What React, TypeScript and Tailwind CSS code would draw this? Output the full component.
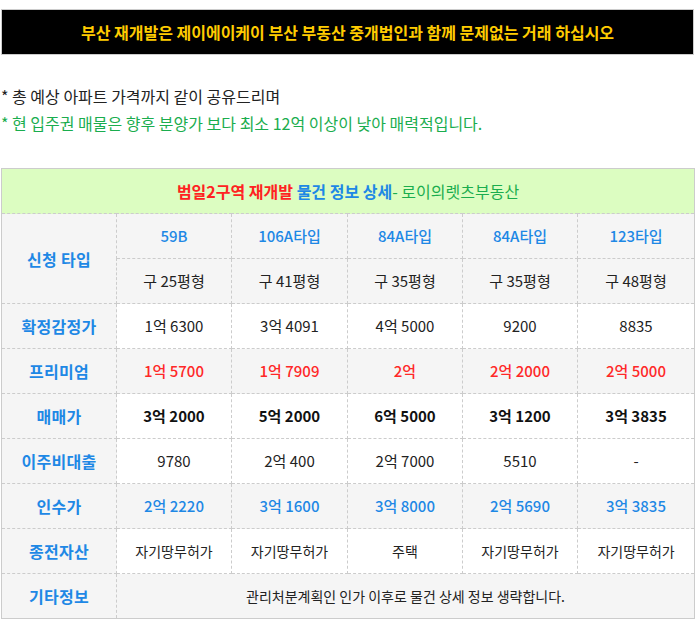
import React from "react";

const types = ["59B", "106A타입", "84A타입", "84A타입", "123타입"];
const pyeong = ["구 25평형", "구 41평형", "구 35평형", "구 35평형", "구 48평형"];
const appraisal = ["1억 6300", "3억 4091", "4억 5000", "9200", "8835"];
const premium = ["1억 5700", "1억 7909", "2억", "2억 2000", "2억 5000"];
const price = ["3억 2000", "5억 2000", "6억 5000", "3억 1200", "3억 3835"];
const loan = ["9780", "2억 400", "2억 7000", "5510", "-"];
const takeover = ["2억 2220", "3억 1600", "3억 8000", "2억 5690", "3억 3835"];
const asset = ["자기땅무허가", "자기땅무허가", "주택", "자기땅무허가", "자기땅무허가"];

const cell = "border border-dashed border-[#cccccc] h-[45px] text-center align-middle p-0";
const label = `${cell} bg-[#f5f5f5] text-[#1e88e5] font-bold text-[16px] tracking-[0.3px]`;

export default function App() {
  return (
    <div
      className="w-[695px] bg-white pt-[9px] pl-[1px]"
      style={{ fontFamily: '"Noto Sans CJK KR", "Noto Sans", sans-serif' }}
    >
      <div className="w-[693px] h-[46px] bg-black border border-[#cccccc] flex items-center justify-center">
        <span className="text-[#ffcc00] font-bold text-[16px]">
          부산 재개발은 제이에이케이 부산 부동산 중개법인과 함께 문제없는 거래 하십시오
        </span>
      </div>
      <div className="mt-[28px] text-[16px] leading-[27px] text-[#222222]">
        * 총 예상 아파트 가격까지 같이 공유드리며
      </div>
      <div className="text-[16px] leading-[27px] text-[#1aad4e]">
        * 현 입주권 매물은 향후 분양가 보다 최소 12억 이상이 낮아 매력적입니다.
      </div>
      <table className="mt-[31px] w-[693px] border-collapse border border-solid border-[#cccccc] table-fixed">
        <colgroup>
          <col className="w-[115px]" />
          <col className="w-[115px]" />
          <col className="w-[116px]" />
          <col className="w-[115px]" />
          <col className="w-[115px]" />
          <col className="w-[117px]" />
        </colgroup>
        <tbody>
          <tr>
            <td colSpan={6} className={`${cell} bg-[#dcfdc1] text-[16px]`}>
              <span className="text-[#ff2222] font-bold">범일2구역 재개발 </span>
              <span className="text-[#1e88e5] font-bold">물건 정보 상세</span>
              <span className="text-[#1aad4e]">- 로이의렛츠부동산</span>
            </td>
          </tr>
          <tr>
            <td rowSpan={2} className={label}>신청 타입</td>
            {types.map((t, i) => (
              <td key={i} className={`${cell} bg-[#f5f5f5] text-[#1e88e5] font-medium text-[15px]`}>{t}</td>
            ))}
          </tr>
          <tr>
            {pyeong.map((t, i) => (
              <td key={i} className={`${cell} bg-[#f5f5f5] text-[#222222] text-[15px]`}>{t}</td>
            ))}
          </tr>
          <tr>
            <td className={label}>확정감정가</td>
            {appraisal.map((t, i) => (
              <td key={i} className={`${cell} bg-white text-[#222222] text-[15px]`}>{t}</td>
            ))}
          </tr>
          <tr>
            <td className={label}>프리미엄</td>
            {premium.map((t, i) => (
              <td key={i} className={`${cell} bg-[#f5f5f5] text-[#ff2828] font-medium text-[15px]`}>{t}</td>
            ))}
          </tr>
          <tr>
            <td className={label}>매매가</td>
            {price.map((t, i) => (
              <td key={i} className={`${cell} bg-white text-[#111111] font-semibold text-[15px]`}>{t}</td>
            ))}
          </tr>
          <tr>
            <td className={label}>이주비대출</td>
            {loan.map((t, i) => (
              <td key={i} className={`${cell} bg-white text-[#222222] text-[15px]`}>{t}</td>
            ))}
          </tr>
          <tr>
            <td className={label}>인수가</td>
            {takeover.map((t, i) => (
              <td key={i} className={`${cell} bg-[#f5f5f5] text-[#1e88e5] font-medium text-[15px]`}>{t}</td>
            ))}
          </tr>
          <tr>
            <td className={label}>종전자산</td>
            {asset.map((t, i) => (
              <td key={i} className={`${cell} bg-white text-[#222222] text-[14px]`}>{t}</td>
            ))}
          </tr>
          <tr>
            <td className={label}>기타정보</td>
            <td colSpan={5} className={`${cell} bg-[#f5f5f5] text-[#222222] text-[14px]`}>
              관리처분계획인 인가 이후로 물건 상세 정보 생략합니다.
            </td>
          </tr>
        </tbody>
      </table>
    </div>
  );
}
